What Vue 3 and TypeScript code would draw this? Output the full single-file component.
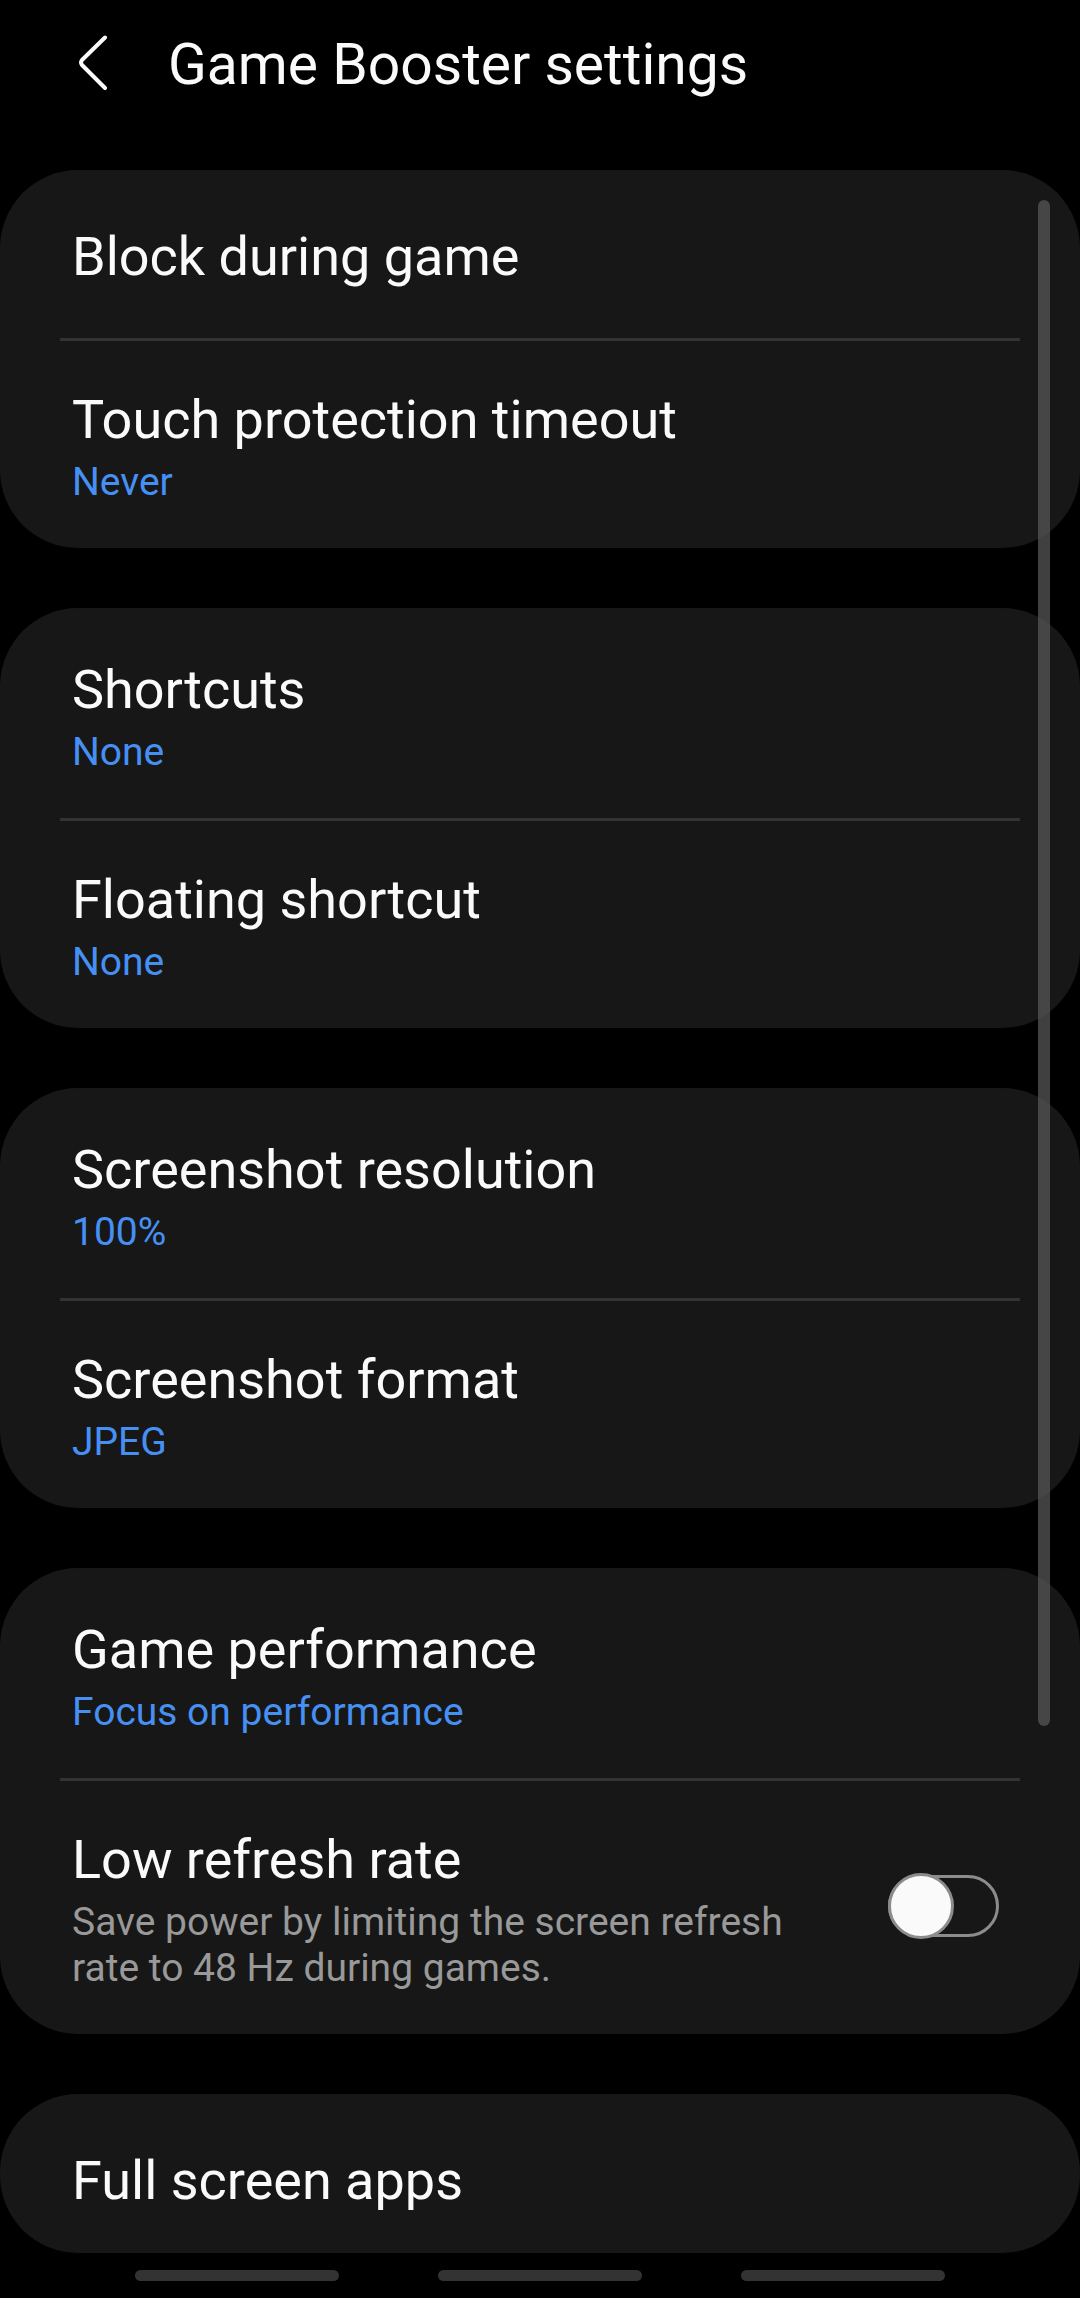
<script setup lang="ts">
import { ref } from 'vue'

interface Setting {
  id: string
  title: string
  value?: string
  description?: string
}

const groups: Setting[][] = [
  [
    { id: 'block', title: 'Block during game' },
    { id: 'touch', title: 'Touch protection timeout', value: 'Never' },
  ],
  [
    { id: 'shortcuts', title: 'Shortcuts', value: 'None' },
    { id: 'floating', title: 'Floating shortcut', value: 'None' },
  ],
  [
    { id: 'resolution', title: 'Screenshot resolution', value: '100%' },
    { id: 'format', title: 'Screenshot format', value: 'JPEG' },
  ],
  [
    { id: 'performance', title: 'Game performance', value: 'Focus on performance' },
    {
      id: 'refresh',
      title: 'Low refresh rate',
      description: 'Save power by limiting the screen refresh rate to 48 Hz during games.',
    },
  ],
  [{ id: 'fullscreen', title: 'Full screen apps' }],
]

const lowRefresh = ref(false)
</script>

<template>
  <div class="screen">
    <header class="bar">
      <button class="back" type="button" aria-label="Back">
        <svg viewBox="0 0 36 60" width="36" height="60" aria-hidden="true">
          <path d="M29 2.5 L6 25 Q4 27.5 6 30 L29 53" />
        </svg>
      </button>
      <h1>Game Booster settings</h1>
    </header>

    <main class="list">
      <section v-for="(group, index) in groups" :key="index" class="card">
        <template v-for="item in group" :key="item.id">
          <label v-if="item.description" class="row detailed" :for="item.id">
            <span class="text">
              <span class="title">{{ item.title }}</span>
              <span class="description">{{ item.description }}</span>
            </span>
            <span class="switch">
              <input :id="item.id" v-model="lowRefresh" type="checkbox" role="switch" />
              <span class="knob"></span>
            </span>
          </label>
          <button v-else class="row" :class="{ detailed: item.value }" type="button">
            <span class="text">
              <span class="title">{{ item.title }}</span>
              <span v-if="item.value" class="value">{{ item.value }}</span>
            </span>
          </button>
        </template>
      </section>
      <div class="scrollbar"></div>
    </main>

    <nav class="gestures" aria-label="System navigation">
      <button type="button" aria-label="Recents"></button>
      <button type="button" aria-label="Home"></button>
      <button type="button" aria-label="Back"></button>
    </nav>
  </div>
</template>

<style>
body {
  margin: 0;
  background: #000;
}
</style>

<style scoped>
.screen {
  min-height: 100vh;
  background: #000;
  color: #fafafa;
  font-family: Roboto, "Liberation Sans", sans-serif;
  overflow: hidden;
}

button {
  margin: 0;
  padding: 0;
  border: 0;
  background: none;
  color: inherit;
  font: inherit;
  text-align: left;
}

.bar {
  display: flex;
  align-items: center;
  gap: 56px;
  height: 130px;
  padding: 0 76px;
  margin-bottom: 40px;
}

.back {
  display: flex;
}

.back path {
  fill: none;
  stroke: #fafafa;
  stroke-width: 4;
  stroke-linecap: round;
  stroke-linejoin: round;
}

h1 {
  margin: 0;
  font-size: 57px;
  line-height: 66px;
  font-weight: 400;
}

.list {
  position: relative;
  display: flex;
  flex-direction: column;
  gap: 60px;
}

.card {
  background: #171717;
  border-radius: 78px;
}

.row {
  position: relative;
  display: flex;
  align-items: center;
  justify-content: space-between;
  box-sizing: border-box;
  width: 100%;
  padding: 55px 81px 49px 72px;
}

.row.detailed {
  padding-top: 50px;
  padding-bottom: 43px;
}

.card:last-of-type .row {
  padding-bottom: 40px;
}

.row + .row::before {
  content: "";
  position: absolute;
  top: 0;
  left: 60px;
  right: 60px;
  height: 3px;
  background: #333;
}

.text {
  display: flex;
  flex-direction: column;
  gap: 7px;
  max-width: 730px;
}

.title {
  font-size: 54px;
  line-height: 64px;
}

.value,
.description {
  font-size: 39px;
  line-height: 46px;
}

.value {
  color: #4690f4;
}

.description {
  color: #999;
}

.switch {
  position: relative;
  display: flex;
  width: 111px;
  height: 62px;
  margin-bottom: 7px;
}

.switch input {
  appearance: none;
  box-sizing: border-box;
  width: 100%;
  height: 100%;
  margin: 0;
  border: 3px solid #8c8c8c;
  border-radius: 31px;
}

.switch input:checked {
  background: #4690f4;
}

.knob {
  position: absolute;
  top: -2px;
  left: 0;
  box-sizing: border-box;
  width: 66px;
  height: 66px;
  border: 3px solid #8c8c8c;
  border-radius: 50%;
  background: #fafafa;
  pointer-events: none;
}

.switch input:checked + .knob {
  left: auto;
  right: 0;
}

.scrollbar {
  position: absolute;
  top: 30px;
  right: 30px;
  width: 12px;
  height: 1526px;
  border-radius: 6px;
  background: rgba(91, 91, 91, 0.7);
}

.gestures {
  display: flex;
  justify-content: center;
  gap: 99px;
  padding: 17px 0;
}

.gestures button {
  width: 204px;
  height: 11px;
  border-radius: 6px;
  background: #333;
}
</style>
